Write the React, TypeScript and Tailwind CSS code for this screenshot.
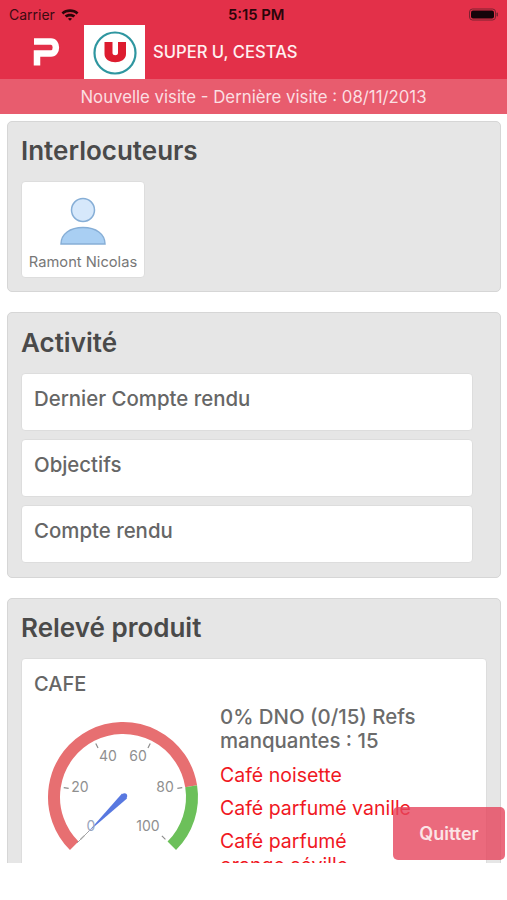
export default function App() {
  const pt = (deg: number, r: number) => {
    const t = ((deg - 90) * Math.PI) / 180;
    return [80 + r * Math.cos(t), 80 + r * Math.sin(t)];
  };
  const arc = (a: number, b: number, r: number) => {
    const [x1, y1] = pt(a, r);
    const [x2, y2] = pt(b, r);
    return `M${x1} ${y1}A${r} ${r} 0 ${b - a > 180 ? 1 : 0} 1 ${x2} ${y2}`;
  };
  const gaugeLabels = [
    { l: "20", x: 37, y: 71 },
    { l: "40", x: 65, y: 40 },
    { l: "60", x: 95, y: 40 },
    { l: "80", x: 122, y: 71 },
    { l: "100", x: 105, y: 110 },
  ];
  return (
    <div className="relative h-[900px] w-[507px] overflow-hidden bg-white font-['Inter','Liberation_Sans',sans-serif]">
      <div className="h-[863px] overflow-hidden">
        <div className="h-[79px] bg-[#e33049]">
          <div className="relative flex h-[25px] items-center justify-between pl-[9px] pr-[8px] pt-[3px] text-[14px] text-[#3b0a12]">
            <div className="flex items-center gap-[6px]">
              <span>Carrier</span>
              <svg width="18" height="13" viewBox="0 0 18 13">
                <path d="M0.5 4.5C5 0.2 13 0.2 17.5 4.5L15.6 6.4C12 3.2 6 3.2 2.4 6.4Z" fill="#2a0509" />
                <path d="M3.7 7.6C6.6 5.1 11.4 5.1 14.3 7.6L12.4 9.5C10.4 8 7.6 8 5.6 9.5Z" fill="#2a0509" />
                <path d="M6.9 10.7C8.1 9.8 9.9 9.8 11.1 10.7L9 12.8Z" fill="#2a0509" />
              </svg>
            </div>
            <span className="absolute left-[228px] top-[4px] text-[14.8px] font-semibold text-[#2a0509]">5:15 PM</span>
            <svg width="30" height="13" viewBox="0 0 30 13">
              <rect x="0.5" y="1" width="26" height="11" rx="3" fill="none" stroke="#7a2230" />
              <rect x="2" y="2.5" width="23" height="8" rx="2" fill="#15040a" />
              <rect x="27.5" y="4.5" width="1.5" height="4" rx="0.7" fill="#7a2230" />
            </svg>
          </div>
          <div className="flex h-[54px] items-center">
            <svg className="ml-[33px]" width="27" height="28" viewBox="0 0 27 28">
              <path d="M1 3.5H18C24.5 3.5 24.5 15.5 18 15.5H4V27.5" fill="none" stroke="#ffffff" strokeWidth="6.5" />
            </svg>
            <div className="ml-[24px] flex h-[54px] w-[61px] items-center justify-center bg-white pt-[2px]">
              <svg width="44" height="44" viewBox="0 0 44 44">
                <circle cx="22" cy="22" r="20.5" fill="#ffffff" stroke="#2f96a0" strokeWidth="2.2" />
                <path d="M11.5 11H19.5V22C19.5 25 25 25 25 22V11H33V23C33 34 11.5 34 11.5 23Z" fill="#dd1c2f" />
              </svg>
            </div>
            <span className="ml-[8px] text-[16.6px] font-medium text-[#fff1f1]">SUPER U, CESTAS</span>
          </div>
        </div>
        <div className="flex h-[35px] items-center justify-center bg-[#e85c6e] pt-[3px] text-[16.8px] text-[#fbdfe2]">
          Nouvelle visite - Dernière visite : 08/11/2013
        </div>

        <div className="flex flex-col gap-[20px] pl-[7px] pr-[6px] pt-[7px]">
          <section className="h-[171px] rounded-[5px] border border-[#d6d6d6] bg-[#e6e6e6] px-[13px] pt-[11px]">
            <h2 className="text-[26px] leading-[36px] font-semibold text-[#4a4a4a]">Interlocuteurs</h2>
            <div className="mt-[12px] flex h-[97px] w-[124px] flex-col items-center rounded-[4px] border border-[#dddddd] bg-white pt-[15px]">
              <svg width="48" height="48" viewBox="0 0 48 48">
                <circle cx="24" cy="13" r="11.5" fill="#d6e8fb" stroke="#86aed6" strokeWidth="1.5" />
                <path d="M2 47C2 37 11 30.5 24 30.5C37 30.5 46 37 46 47Z" fill="#a9cff3" stroke="#86aed6" strokeWidth="1.5" />
              </svg>
              <span className="mt-[8px] text-[14.7px] leading-[18px] text-[#777777]">Ramont Nicolas</span>
            </div>
          </section>

          <section className="h-[266px] rounded-[5px] border border-[#d6d6d6] bg-[#e6e6e6] px-[13px] pt-[12px]">
            <h2 className="text-[26px] leading-[36px] font-semibold text-[#4a4a4a]">Activité</h2>
            <div className="mt-[12px] flex w-[452px] flex-col gap-[8px]">
              {["Dernier Compte rendu", "Objectifs", "Compte rendu"].map((t) => (
                <div key={t} className="h-[58px] rounded-[4px] border border-[#dddddd] bg-white px-[12px] pt-[12px] text-[20.4px] leading-[26px] font-medium text-[#666666]">
                  {t}
                </div>
              ))}
            </div>
          </section>

          <section className="h-[400px] rounded-[5px] border border-[#d6d6d6] bg-[#e6e6e6] px-[13px] pt-[11px]">
            <h2 className="text-[26px] leading-[36px] font-semibold text-[#4a4a4a]">Relevé produit</h2>
            <div className="mt-[12px] h-[300px] w-[466px] rounded-[4px] border border-[#dddddd] bg-white px-[12px] pt-[12px]">
              <div className="text-[20px] leading-[26px] font-medium text-[#666666]">CAFE</div>
              <div className="mt-[8px] flex">
                <svg className="mt-[12px] ml-[9px]" width="160" height="160" viewBox="0 0 160 160">
                  <path d={arc(-135, 81, 69)} fill="none" stroke="#e76f71" strokeWidth="12" />
                  <path d={arc(81, 135, 69)} fill="none" stroke="#6cc05a" strokeWidth="12" />
                  <g stroke="#8c8c8c" strokeWidth="1.2">
                    {[-135, -81, -27, 27, 81, 135].map((a) => {
                      const [x1, y1] = pt(a, 60);
                      const [x2, y2] = pt(a, 55);
                      return <line key={a} x1={x1} y1={y1} x2={x2} y2={y2} />;
                    })}
                  </g>
                  {gaugeLabels.map((g) => (
                    <text key={g.l} x={g.x} y={g.y} fontSize="14" fill="#8f8f8f" textAnchor="middle" dominantBaseline="middle">
                      {g.l}
                    </text>
                  ))}
                  <line x1="34" y1="126" x2="46" y2="114" stroke="#a5a5a5" strokeWidth="1" />
                  <path d="M45 115L79 76.5L84 81.5Z" fill="#5878e0" />
                  <circle cx="81.5" cy="79" r="2.7" fill="#5878e0" />
                  <text x="48" y="110" fontSize="14" fill="#9aa6bd" textAnchor="middle" dominantBaseline="middle">0</text>
                </svg>
                <div className="ml-[17px] w-[215px]">
                  <div className="text-[20.4px] leading-[24px] font-medium text-[#6b6b6b]">0% DNO (0/15) Refs manquantes : 15</div>
                  <div className="mt-[10px] whitespace-nowrap text-[19.5px] leading-[24px] text-[#f0181f]">Café noisette</div>
                  <div className="mt-[9px] whitespace-nowrap text-[19.5px] leading-[24px] text-[#f0181f]">Café parfumé vanille</div>
                  <div className="mt-[9px] text-[19.5px] leading-[24px] text-[#f0181f]">Café parfumé<br />orange séville</div>
                </div>
              </div>
            </div>
          </section>
        </div>
      </div>
      <button className="absolute left-[393px] top-[807px] flex h-[53px] w-[112px] items-center justify-center rounded-[5px] bg-[#e6455d]/80 text-[18px] font-semibold text-[#fbe4e6]">
        Quitter
      </button>
    </div>
  );
}
